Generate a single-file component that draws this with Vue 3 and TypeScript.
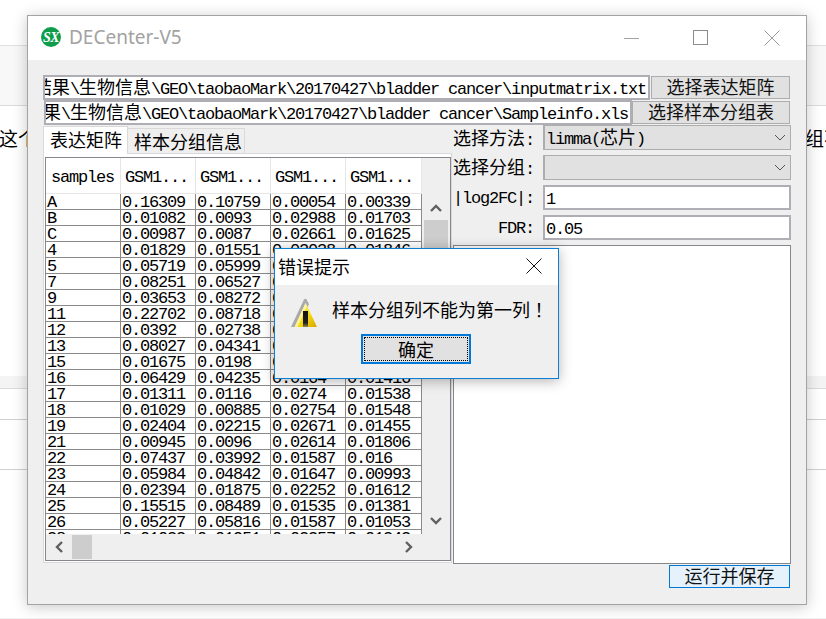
<script setup lang="ts">
const columns: string[] = ['samples', 'GSM1...', 'GSM1...', 'GSM1...', 'GSM1...']
const rows: string[][] = [
  ['A', '0.16309', '0.10759', '0.00054', '0.00339'],
  ['B', '0.01082', '0.0093', '0.02988', '0.01703'],
  ['C', '0.00987', '0.0087', '0.02661', '0.01625'],
  ['4', '0.01829', '0.01551', '0.02038', '0.01846'],
  ['5', '0.05719', '0.05999', '0.01632', '0.01204'],
  ['7', '0.08251', '0.06527', '0.01588', '0.01377'],
  ['9', '0.03653', '0.08272', '0.01741', '0.01296'],
  ['11', '0.22702', '0.08718', '0.01503', '0.01165'],
  ['12', '0.0392', '0.02738', '0.02117', '0.01482'],
  ['13', '0.08027', '0.04341', '0.01829', '0.01353'],
  ['15', '0.01675', '0.0198', '0.02466', '0.01574'],
  ['16', '0.06429', '0.04235', '0.0164', '0.01416'],
  ['17', '0.01311', '0.0116', '0.0274', '0.01538'],
  ['18', '0.01029', '0.00885', '0.02754', '0.01548'],
  ['19', '0.02404', '0.02215', '0.02671', '0.01455'],
  ['21', '0.00945', '0.0096', '0.02614', '0.01806'],
  ['22', '0.07437', '0.03992', '0.01587', '0.016'],
  ['23', '0.05984', '0.04842', '0.01647', '0.00993'],
  ['24', '0.02394', '0.01875', '0.02252', '0.01612'],
  ['25', '0.15515', '0.08489', '0.01535', '0.01381'],
  ['26', '0.05227', '0.05816', '0.01587', '0.01053'],
  ['28', '0.01033', '0.01951', '0.02357', '0.01343'],
]
</script>

<template>
  <div class="desktop">
    <div class="bg-top"></div>
    <div class="bg-band"></div>
    <div class="bg-text">
      <span class="bg-left">这个</span>
      <span class="bg-right">组不</span>
    </div>
    <div class="bg-thin"></div>
    <div class="bg-row1"></div>
    <div class="bg-row2"></div>
    <div class="bg-end"></div>

    <section class="window">
      <header class="titlebar">
        <svg class="logo" width="20" height="20" viewBox="0 0 20 20">
          <circle cx="10" cy="10" r="10" fill="#0f9d4c" />
          <text x="10" y="14.5" text-anchor="middle" class="logo-text">SX</text>
        </svg>
        <span class="app-title">DECenter-V5</span>
        <div class="controls">
          <svg width="16" height="16" viewBox="0 0 16 16"><path d="M0 8.5H15" stroke="#a3a3a3" fill="none" /></svg>
          <svg class="ctl-max" width="16" height="16" viewBox="0 0 16 16"><rect x="0.5" y="0.5" width="14" height="14" stroke="#8c8c8c" fill="none" /></svg>
          <svg class="ctl-close" width="16" height="16" viewBox="0 0 16 16"><path d="M0.5 0.5L15.5 15.5M15.5 0.5L0.5 15.5" stroke="#9a9a9a" fill="none" /></svg>
        </div>
      </header>

      <div class="content">
        <div class="file-row">
          <div class="path">
            <span class="path-text"><span class="cjk">结果</span>\<span class="cjk">生物信息</span>\GEO\taobaoMark\20170427\bladder cancer\inputmatrix.txt</span>
          </div>
          <button class="btn btn-a cjk">选择表达矩阵</button>
        </div>
        <div class="file-row second">
          <div class="path">
            <span class="path-text"><span class="cjk">果</span>\<span class="cjk">生物信息</span>\GEO\taobaoMark\20170427\bladder cancer\Sampleinfo.xls</span>
          </div>
          <button class="btn btn-b cjk">选择样本分组表</button>
        </div>

        <div class="main">
          <div class="left">
            <div class="tabs">
              <div class="tab active cjk">表达矩阵</div>
              <div class="tab cjk">样本分组信息</div>
            </div>
            <div class="pane">
              <div class="grid-box">
                <div class="table">
                  <div class="tr head">
                    <div v-for="(c, i) in columns" :key="i" class="td">{{ c }}</div>
                  </div>
                  <div v-for="(r, ri) in rows" :key="ri" class="tr">
                    <div v-for="(v, ci) in r" :key="ci" class="td">{{ v }}</div>
                  </div>
                </div>
                <div class="vscroll">
                  <div class="sb-btn">
                    <svg width="12" height="8" viewBox="0 0 12 8"><path d="M1 7L6 2L11 7" stroke="#606060" stroke-width="2.4" fill="none" /></svg>
                  </div>
                  <div class="v-thumb"></div>
                  <div class="v-rest"></div>
                  <div class="sb-btn">
                    <svg width="12" height="8" viewBox="0 0 12 8"><path d="M1 1L6 6L11 1" stroke="#606060" stroke-width="2.4" fill="none" /></svg>
                  </div>
                </div>
                <div class="hscroll">
                  <div class="sb-hbtn">
                    <svg width="8" height="12" viewBox="0 0 8 12"><path d="M7 1L2 6L7 11" stroke="#606060" stroke-width="2.4" fill="none" /></svg>
                  </div>
                  <div class="h-thumb"></div>
                  <div class="h-rest"></div>
                  <div class="sb-hbtn">
                    <svg width="8" height="12" viewBox="0 0 8 12"><path d="M1 1L6 6L1 11" stroke="#606060" stroke-width="2.4" fill="none" /></svg>
                  </div>
                </div>
              </div>
            </div>
          </div>

          <div class="right">
            <div class="form-row">
              <label class="lbl"><span class="cjk">选择方法</span>:</label>
              <div class="select"><span>limma(<span class="cjk">芯片</span>)</span>
                <svg class="caret" width="12" height="7" viewBox="0 0 12 7"><path d="M1 1L6 6L11 1" stroke="#555" fill="none" /></svg>
              </div>
            </div>
            <div class="form-row">
              <label class="lbl lbl-up"><span class="cjk">选择分组</span>:</label>
              <div class="select">
                <span></span>
                <svg class="caret" width="12" height="7" viewBox="0 0 12 7"><path d="M1 1L6 6L11 1" stroke="#555" fill="none" /></svg>
              </div>
            </div>
            <div class="form-row">
              <label class="lbl lbl-latin">|log2FC|:</label>
              <div class="field">1</div>
            </div>
            <div class="form-row">
              <label class="lbl lbl-latin">FDR:</label>
              <div class="field">0.05</div>
            </div>
            <div class="output"></div>
          </div>
        </div>

        <div class="run-row">
          <button class="btn run cjk">运行并保存</button>
        </div>
      </div>

      <div class="dialog">
        <div class="dlg-title">
          <span class="cjk">错误提示</span>
          <svg width="16" height="16" viewBox="0 0 16 16"><path d="M0.5 0.5L15.5 15.5M15.5 0.5L0.5 15.5" stroke="#111" fill="none" /></svg>
        </div>
        <div class="dlg-body">
          <div class="dlg-msg">
            <svg class="warn" width="28" height="29" viewBox="0 0 28 29">
              <defs>
                <linearGradient id="warnFill" x1="0" y1="0" x2="1" y2="1">
                  <stop offset="0" stop-color="#fff7a0" />
                  <stop offset="0.55" stop-color="#f7dc10" />
                  <stop offset="1" stop-color="#d9a400" />
                </linearGradient>
                <linearGradient id="warnMark" x1="0" y1="0" x2="0" y2="1">
                  <stop offset="0" stop-color="#111" />
                  <stop offset="0.75" stop-color="#222" />
                  <stop offset="1" stop-color="#9a8a40" />
                </linearGradient>
              </defs>
              <path d="M0 29L13 1.5Q14 0 15.5 1.5L18 6L6 29Z" fill="#a9a9a9" />
              <path d="M3.5 29L14.5 5L26 29Z" fill="url(#warnFill)" />
              <path d="M3.5 29L14.5 5L16 8L6.5 29Z" fill="#fff9c8" opacity="0.7" />
              <rect x="12" y="13" width="5" height="16" fill="url(#warnMark)" />
            </svg>
            <span class="cjk msg-text">样本分组列不能为第一列<span class="bang">&#xFF01;</span></span>
          </div>
          <button class="ok cjk"><span class="ok-inner">确定</span></button>
        </div>
      </div>
    </section>
  </div>
</template>

<style scoped>
.desktop {
  position: relative;
  width: 826px;
  height: 619px;
  overflow: hidden;
  background: #fff;
  font-family: "Liberation Mono", monospace;
  font-size: 17px;
  letter-spacing: -1.2px;
  color: #000;
}
.cjk {
  font-family: "Noto Sans CJK SC", sans-serif;
  font-size: 18px;
  font-weight: 400;
  letter-spacing: 0;
}
.bang { font-family: "Noto Sans CJK TC", sans-serif; }
.bg-top { height: 45px; }
.bg-band {
  height: 59px;
  background: #f8f8f8;
  border-top: 1px solid #e0e0e0;
  border-bottom: 1px solid #dcdcdc;
  box-sizing: content-box;
}
.bg-text {
  height: 270px;
  display: flex;
  justify-content: space-between;
  font-family: "Noto Sans CJK SC", sans-serif;
  font-size: 19px;
  letter-spacing: 0;
  line-height: 26px;
  padding-top: 19px;
  box-sizing: border-box;
}
.bg-left { margin-left: -1px; }
.bg-right { margin-right: -17px; }
.bg-thin {
  height: 12px;
  background: #f4f4f4;
  border-bottom: 1px solid #dcdcdc;
}
.bg-row1 { height: 30px; border-bottom: 1px solid #d0d0d0; }
.bg-row2 { height: 49px; border-bottom: 1px solid #d0d0d0; }
.bg-end { height: 148px; border-bottom: 1px solid #f2f2f2; }

.window {
  position: absolute;
  left: 27px;
  top: 15px;
  width: 780px;
  height: 590px;
  box-sizing: border-box;
  border: 1px solid #a3a3a3;
  background: #efefef;
  box-shadow: 0 2px 14px rgba(0, 0, 0, 0.22);
}
.titlebar {
  height: 44px;
  background: #fff;
  display: flex;
  align-items: center;
  padding-left: 13px;
}
.logo { flex: none; margin-bottom: 2px; }
.logo-text {
  font-family: "Liberation Serif", serif;
  font-weight: 700;
  font-style: italic;
  font-size: 14px;
  letter-spacing: -0.5px;
  fill: #fff;
}
.app-title {
  margin-left: 8px;
  margin-bottom: 2px;
  font-family: "Noto Sans", sans-serif;
  font-size: 19px;
  letter-spacing: 0;
  color: #a2a2a2;
}
.controls {
  margin-left: auto;
  display: flex;
  padding-right: 26px;
}
.controls svg { display: block; }
.ctl-max { margin-left: 53px; }
.ctl-close { margin-left: 55px; }
.content { padding: 15px 15px 0 15px; }
.file-row {
  display: flex;
  height: 25px;
  margin-right: 1px;
  gap: 1px;
}
.file-row.second { margin-left: 1px; gap: 0; }
.path {
  flex: 1;
  min-width: 0;
  background: #fff;
  border: 2px solid #aeaeb4;
  box-sizing: border-box;
  display: flex;
  justify-content: flex-end;
  align-items: center;
  overflow: hidden;
  padding-right: 2px;
  white-space: pre;
}
.path-text { flex: none; line-height: 20px; }
.btn {
  flex: none;
  margin: 1px 0;
  padding: 0 0 2px;
  background: #e1e1e1;
  border: 1px solid #adadad;
  color: #111;
  line-height: 19px;
  box-sizing: border-box;
}
.btn-a { width: 139px; }
.btn-b { width: 158px; }
.main { display: flex; height: 439px; gap: 1px; }
.left { width: 409px; flex: none; padding-top: 1px; box-sizing: border-box; }
.tabs { display: flex; align-items: flex-end; height: 27px; }
.tab {
  height: 25px;
  line-height: 25px;
  padding: 0 1px 0 6px;
  width: 117px;
  box-sizing: border-box;
  background: #efefef;
  border: 1px solid #d9d9d9;
  border-bottom: none;
  border-left: none;
  white-space: nowrap;
}
.tab.active {
  width: 85px;
  height: 28px;
  line-height: 25px;
  padding-left: 6px;
  background: #fff;
  border-left: 1px solid #d9d9d9;
  position: relative;
  margin-bottom: -1px;
  z-index: 1;
}
.pane {
  height: 410px;
  box-sizing: border-box;
  border: 1px solid #d9d9d9;
  background: #fff;
  padding: 3px 1px 1px 1px;
}
.grid-box {
  width: 406px;
  height: 404px;
  box-sizing: border-box;
  border: 1px solid #85878c;
  background: #efefef;
  display: grid;
  grid-template-columns: 376px 28px;
  grid-template-rows: 376px 26px;
}
.table {
  overflow: hidden;
  background: #fff;
}
.tr {
  display: grid;
  grid-template-columns: 75px 75px 75px 75px 76px;
  height: 16px;
  line-height: 18px;
  box-sizing: border-box;
  border-bottom: 1px solid #8a8a8a;
}
.td {
  border-right: 1px solid #8a8a8a;
  padding-left: 1px;
  white-space: nowrap;
  overflow: hidden;
}
.tr.head {
  height: 36px;
  line-height: 40px;
  border-bottom: 1px solid #e6e6e6;
}
.tr.head .td {
  border-right: 1px solid #e6e6e6;
  padding-left: 4px;
}
.tr.head .td:first-child { padding-left: 5px; }
.vscroll {
  padding: 38px 1px 1px 2px;
  box-sizing: border-box;
  display: flex;
  flex-direction: column;
  width: 27px;
}
.sb-btn {
  height: 24px;
  flex: none;
  display: flex;
  align-items: center;
  justify-content: center;
}
.v-thumb { height: 70px; background: #cdcdcd; flex: none; }
.v-rest { flex: 1; }
.hscroll {
  grid-column: 1;
  display: flex;
  padding: 1px 0;
  box-sizing: border-box;
  height: 26px;
}
.sb-hbtn {
  width: 26px;
  flex: none;
  display: flex;
  align-items: center;
  justify-content: center;
}
.h-thumb { width: 20px; background: #cdcdcd; flex: none; }
.h-rest { flex: 1; }
.right {
  width: 338px;
  flex: none;
  display: flex;
  flex-direction: column;
  gap: 5px;
}
.form-row { display: flex; height: 25px; }
.lbl {
  width: 90px;
  flex: none;
  text-align: right;
  padding-right: 9px;
  box-sizing: border-box;
  line-height: 25px;
  white-space: nowrap;
}
.lbl-up { line-height: 23px; }
.lbl-latin { line-height: 28px; }
.select {
  flex: 1;
  box-sizing: border-box;
  background: #e1e1e1;
  border: 1px solid #adadad;
  border-width: 1px 1px 1px 2px;
  display: flex;
  align-items: center;
  justify-content: space-between;
  padding: 0 4px 0 1px;
}
.select > span { position: relative; top: -2px; }
.caret { flex: none; }
.field {
  flex: 1;
  box-sizing: border-box;
  background: #fff;
  border: 2px solid #aeaeb4;
  line-height: 25px;
  padding-left: 1px;
}
.output {
  flex: 1;
  background: #fff;
  border: 1px solid #85878c;
  box-sizing: border-box;
}
.run-row {
  display: flex;
  justify-content: flex-end;
  margin-top: 1px;
  margin-right: 1px;
}
.btn.run {
  margin: 0;
  width: 121px;
  height: 23px;
  background: #e5f1fb;
  border: 1px solid #0078d7;
}
.dialog {
  position: absolute;
  left: 246px;
  top: 232px;
  width: 285px;
  height: 131px;
  box-sizing: border-box;
  border: 1px solid #0a7fd4;
  background: #efefef;
  box-shadow: 0 2px 12px rgba(0, 0, 0, 0.3);
  display: flex;
  flex-direction: column;
}
.dlg-title {
  height: 36px;
  background: #fff;
  flex: none;
  display: flex;
  align-items: center;
  justify-content: space-between;
  padding: 0 16px 2px 3px;
  box-sizing: border-box;
}
.dlg-title svg { display: block; }
.dlg-body {
  flex: 1;
  display: flex;
  flex-direction: column;
  align-items: center;
}
.dlg-msg {
  align-self: stretch;
  display: flex;
  height: 49px;
  align-items: flex-start;
  padding: 13px 0 0 16px;
  box-sizing: border-box;
}
.warn { flex: none; }
.msg-text {
  margin-left: 13px;
  line-height: 23px;
  white-space: nowrap;
}
.ok {
  width: 110px;
  height: 30px;
  padding: 1px;
  margin-left: -1px;
  box-sizing: border-box;
  background: #e1e1e1;
  border: 2px solid #0078d7;
  color: #000;
}
.ok-inner {
  display: block;
  height: 100%;
  line-height: 22px;
  border: 1px dotted #000;
  box-sizing: border-box;
}
</style>
